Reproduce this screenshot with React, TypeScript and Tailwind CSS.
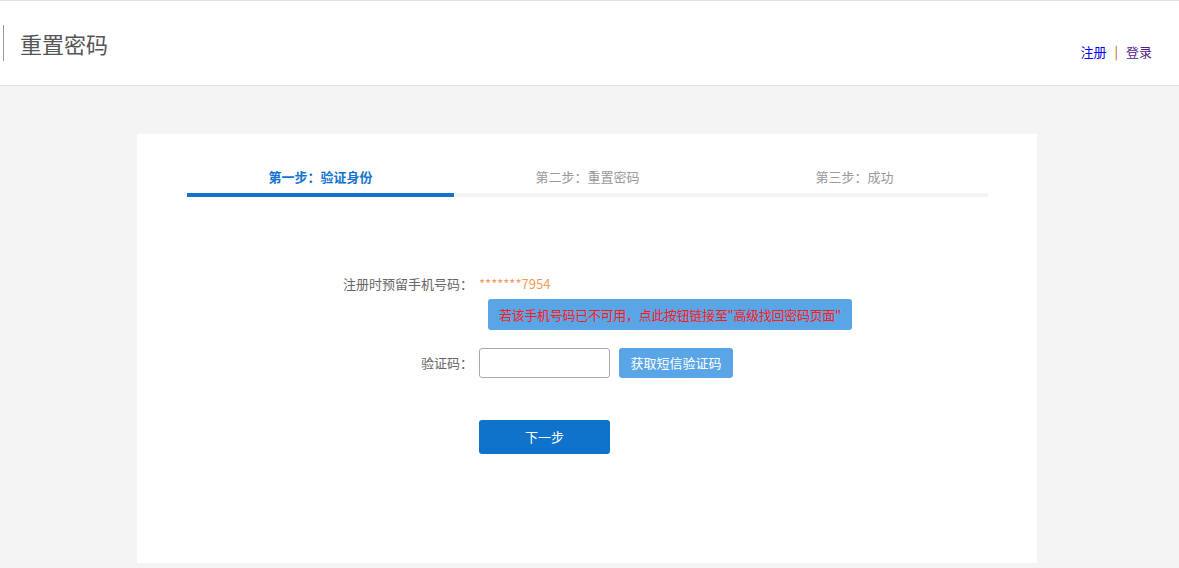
export default function App() {
  const steps = ["第一步：验证身份", "第二步：重置密码", "第三步：成功"];

  return (
    <div
      className="min-h-[568px] bg-[#f4f4f4] text-[13px] text-[#555]"
      style={{ fontFamily: '"Microsoft YaHei", "Noto Sans CJK SC", sans-serif' }}
    >
      <header className="flex h-[86px] items-center justify-between border-t border-b border-[#e2e2e2] bg-white">
        <div className="ml-[3px] flex h-[36px] items-center border-l border-[#999] pl-[16px]">
          <h1 className="text-[22px] font-normal leading-none text-[#555]">重置密码</h1>
        </div>
        <nav className="mr-[27px] mt-[17px] flex items-center gap-[8px] text-[13px]">
          <a href="#" className="text-[#0000ee]">注册</a>
          <span className="text-[#b06020]">|</span>
          <a href="#" className="text-[#551a8b]">登录</a>
        </nav>
      </header>

      <main className="pt-[48px] pb-[5px]">
        <section className="ml-[137px] h-[429px] w-[900px] bg-white px-[50px] pt-[33px]">
          <div className="flex w-[801px]">
            {steps.map((step, i) => (
              <div key={step} className="flex-1">
                <p
                  className={`pb-[6px] text-center text-[13px] leading-[20px] ${
                    i === 0 ? "font-bold text-[#1173cf]" : "text-[#999]"
                  }`}
                >
                  {step}
                </p>
                <div className={`h-[4px] ${i === 0 ? "bg-[#1173cf]" : "bg-[#f4f4f4]"}`} />
              </div>
            ))}
          </div>

          <div className="mt-[77px] space-y-[18px]">
            <div>
              <div className="flex items-center">
                <label className="w-[292px] pr-[6px] text-right text-[13px] leading-[20px] text-[#666]">
                  注册时预留手机号码：
                </label>
                <span className="text-[13px] leading-[20px] text-[#f39a5a]">*******7954</span>
              </div>
              <div className="ml-[301px] mt-[5px]">
                <button className="h-[31px] rounded-[3px] bg-[#5aa5e6] px-[11px] text-[13px] tracking-[-0.3px] text-[#ff1a1a]">
                  若该手机号码已不可用，点此按钮链接至"高级找回密码页面"
                </button>
              </div>
            </div>

            <div className="flex items-center">
              <label className="w-[292px] pr-[6px] text-right text-[13px] leading-[20px] text-[#666]">
                验证码：
              </label>
              <input className="h-[30px] w-[131px] rounded-[3px] border border-[#aaa] px-2 outline-none" />
              <button className="ml-[9px] h-[30px] w-[114px] rounded-[3px] bg-[#5aa5e6] text-[13px] text-white">
                获取短信验证码
              </button>
            </div>

            <div className="ml-[292px] pt-[24px]">
              <button className="h-[34px] w-[131px] rounded-[3px] bg-[#0f73cc] text-[13px] text-white">
                下一步
              </button>
            </div>
          </div>
        </section>
      </main>
    </div>
  );
}
